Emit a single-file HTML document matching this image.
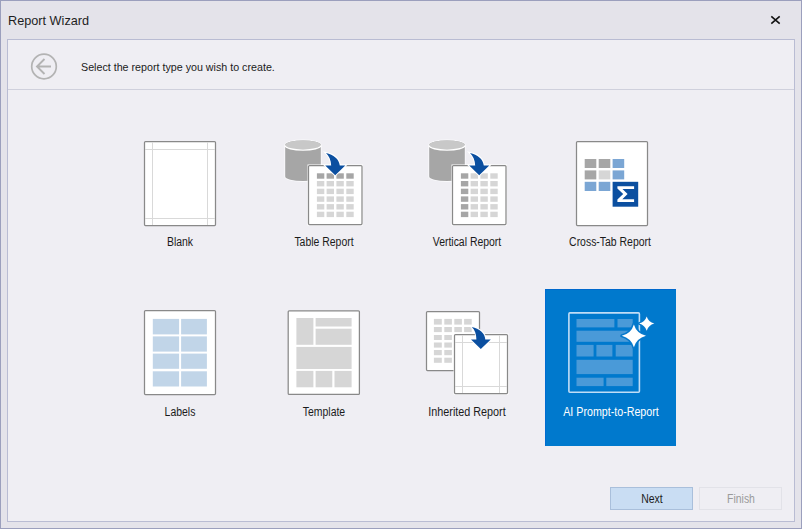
<!DOCTYPE html>
<html><head><meta charset="utf-8">
<style>
html,body{margin:0;padding:0;}
body{width:802px;height:529px;position:relative;overflow:hidden;background:#e4e3ea;font-family:"Liberation Sans",sans-serif;}
.frame{position:absolute;left:0;top:0;width:800px;height:527px;border:1px solid #9b9fbd;}
.panel{position:absolute;left:7px;top:39px;width:786px;height:481px;border:1px solid #b9bcd3;background:#efeef3;}
.t{position:absolute;white-space:nowrap;line-height:12px;}
.title{left:8px;top:14px;font-size:13.5px;color:#1e1e1e;line-height:14px;transform:scaleX(0.94);transform-origin:0 0;}
.hdr{left:81px;top:61px;font-size:11.5px;color:#1b1b1b;transform:scaleX(0.93);transform-origin:0 0;}
.lbl{font-size:12px;color:#1b1b1b;transform:translateX(-50%) scaleX(0.87);transform-origin:50% 0;}
.c{position:absolute;white-space:nowrap;font-size:12px;line-height:12px;color:#1b1b1b;}
svg{position:absolute;left:0;top:0;}
.btn{position:absolute;box-sizing:border-box;}
</style></head>
<body>
<div class="frame"></div>
<div class="t title">Report Wizard</div>
<div class="panel"></div>
<div class="btn" style="left:545px;top:289px;width:131px;height:157px;background:#0079cd;border-top:1px solid #0068cc;border-left:1px solid #006cd0;"></div>
<div class="btn" style="left:610px;top:487px;width:83px;height:23px;background:#c9ddf3;border:1px solid #a9bfdb;"></div>
<div class="btn" style="left:699px;top:487px;width:83px;height:23px;border:1px solid #e2e2e8;"></div>

<svg width="802" height="529" viewBox="0 0 802 529">
  <!-- close X -->
  <path d="M771.3 16.3 L779.7 23.7 M779.7 16.3 L771.3 23.7" stroke="#111" stroke-width="1.55" fill="none"/>
  <!-- header separator -->
  <rect x="8" y="89" width="786" height="1" fill="#cfd0dc"/>
  <!-- back circle -->
  <circle cx="44" cy="66.5" r="12.3" stroke="#b3b3b3" stroke-width="1.7" fill="none"/>
  <path d="M37 66.5 H51 M44.5 59 L37 66.5 L44.5 74" stroke="#b3b3b3" stroke-width="1.9" fill="none"/>

  <!-- Blank -->
  <rect x="144.5" y="141.5" width="71" height="84" fill="#fff" stroke="#898989" stroke-width="1.25" rx="1"/>
  <path d="M152.5 142 V225 M207.5 142 V225 M145 149.5 H215 M145 218.5 H215" stroke="#d9d9d9" stroke-width="1"/>

  <!-- Table report -->
  <g id="tbl">
    <path d="M285.2 145 A17.8 4.6 0 0 1 320.8 145 V176.5 A17.8 4.6 0 0 1 285.2 176.5 Z" fill="#a6a6a6" stroke="#fafafc" stroke-width="1.6" paint-order="stroke"/>
    <ellipse cx="303" cy="145" rx="17.8" ry="4.6" fill="#c8c8c8"/>
    <path d="M285.2 145.5 A17.8 4.6 0 0 0 320.8 145.5" stroke="#fff" stroke-width="1.3" fill="none"/>
    <rect x="307.5" y="164.5" width="55.5" height="61" fill="#fff"/>
    <rect x="308.5" y="165.5" width="53.5" height="59" fill="#fff" stroke="#898989" stroke-width="1.25" rx="1"/>
  </g>
  <g fill="#a6a6a6">
    <rect x="316.9" y="173.3" width="7.4" height="5.4"/><rect x="326.6" y="173.3" width="7.4" height="5.4"/><rect x="336.4" y="173.3" width="7.4" height="5.4"/><rect x="346.3" y="173.3" width="7.4" height="5.4"/>
  </g>
  <g fill="#d6d6d6">
    <rect x="316.9" y="181" width="7.4" height="5.4"/><rect x="326.6" y="181" width="7.4" height="5.4"/><rect x="336.4" y="181" width="7.4" height="5.4"/><rect x="346.3" y="181" width="7.4" height="5.4"/>
    <rect x="316.9" y="188.7" width="7.4" height="5.4"/><rect x="326.6" y="188.7" width="7.4" height="5.4"/><rect x="336.4" y="188.7" width="7.4" height="5.4"/><rect x="346.3" y="188.7" width="7.4" height="5.4"/>
    <rect x="316.9" y="196.4" width="7.4" height="5.4"/><rect x="326.6" y="196.4" width="7.4" height="5.4"/><rect x="336.4" y="196.4" width="7.4" height="5.4"/><rect x="346.3" y="196.4" width="7.4" height="5.4"/>
    <rect x="316.9" y="204.1" width="7.4" height="5.4"/><rect x="326.6" y="204.1" width="7.4" height="5.4"/><rect x="336.4" y="204.1" width="7.4" height="5.4"/><rect x="346.3" y="204.1" width="7.4" height="5.4"/>
    <rect x="316.9" y="211.7" width="7.4" height="5.4"/><rect x="326.6" y="211.7" width="7.4" height="5.4"/><rect x="336.4" y="211.7" width="7.4" height="5.4"/><rect x="346.3" y="211.7" width="7.4" height="5.4"/>
  </g>
  <path id="arr" d="M326 153 C333.5 154.5 339 159 339.8 165.5 L345.3 165.5 L335.2 175.2 L325.2 165.5 L331.2 165.5 C331 160 329 156 326 153 Z" fill="#0b4fa0" stroke="#fff" stroke-width="2" paint-order="stroke"/>

  <!-- Vertical report -->
  <use href="#tbl" x="144" y="0"/>
  <g fill="#a6a6a6">
    <rect x="460.9" y="173.3" width="7.4" height="5.4"/><rect x="460.9" y="181" width="7.4" height="5.4"/><rect x="460.9" y="188.7" width="7.4" height="5.4"/><rect x="460.9" y="196.4" width="7.4" height="5.4"/><rect x="460.9" y="204.1" width="7.4" height="5.4"/><rect x="460.9" y="211.7" width="7.4" height="5.4"/>
  </g>
  <g fill="#d6d6d6">
    <rect x="470.6" y="173.3" width="7.4" height="5.4"/><rect x="480.4" y="173.3" width="7.4" height="5.4"/><rect x="490.3" y="173.3" width="7.4" height="5.4"/>
    <rect x="470.6" y="181" width="7.4" height="5.4"/><rect x="480.4" y="181" width="7.4" height="5.4"/><rect x="490.3" y="181" width="7.4" height="5.4"/>
    <rect x="470.6" y="188.7" width="7.4" height="5.4"/><rect x="480.4" y="188.7" width="7.4" height="5.4"/><rect x="490.3" y="188.7" width="7.4" height="5.4"/>
    <rect x="470.6" y="196.4" width="7.4" height="5.4"/><rect x="480.4" y="196.4" width="7.4" height="5.4"/><rect x="490.3" y="196.4" width="7.4" height="5.4"/>
    <rect x="470.6" y="204.1" width="7.4" height="5.4"/><rect x="480.4" y="204.1" width="7.4" height="5.4"/><rect x="490.3" y="204.1" width="7.4" height="5.4"/>
    <rect x="470.6" y="211.7" width="7.4" height="5.4"/><rect x="480.4" y="211.7" width="7.4" height="5.4"/><rect x="490.3" y="211.7" width="7.4" height="5.4"/>
  </g>
  <use href="#arr" x="144" y="0"/>

  <!-- Cross-tab -->
  <rect x="576.5" y="141.5" width="71" height="84" fill="#fff" stroke="#898989" stroke-width="1.25" rx="1"/>
  <rect x="584.7" y="159" width="11.6" height="9" fill="#a6a6a6"/>
  <rect x="598.7" y="159" width="11.6" height="9" fill="#a6a6a6"/>
  <rect x="612.6" y="159" width="11.6" height="9" fill="#7ba6d4"/>
  <rect x="584.7" y="170.4" width="11.6" height="9" fill="#a6a6a6"/>
  <rect x="598.7" y="170.4" width="11.6" height="9" fill="#d6d6d6"/>
  <rect x="612.6" y="170.4" width="11.6" height="9" fill="#7ba6d4"/>
  <rect x="584.7" y="181.8" width="11.6" height="9.2" fill="#7ba6d4"/>
  <rect x="598.7" y="181.8" width="11.6" height="9.2" fill="#7ba6d4"/>
  <rect x="612.6" y="181.8" width="25.6" height="24.9" fill="#0b4fa0"/>
  <path d="M617.4 186.2 H634.1 V189 H622.5 L627.6 194.1 L622.3 199.3 H634.1 V202 H617.4 V199.6 L623.2 194.1 L617.4 188.6 Z" fill="#fff"/>

  <!-- Labels -->
  <rect x="144.5" y="310.5" width="71" height="84" fill="#fff" stroke="#898989" stroke-width="1.25" rx="1"/>
  <g fill="#c1d5e8">
    <rect x="152.8" y="318.9" width="26.3" height="15.5"/><rect x="181.1" y="318.9" width="25.8" height="15.5"/>
    <rect x="152.8" y="336.4" width="26.3" height="15.2"/><rect x="181.1" y="336.4" width="25.8" height="15.2"/>
    <rect x="152.8" y="353.6" width="26.3" height="15.2"/><rect x="181.1" y="353.6" width="25.8" height="15.2"/>
    <rect x="152.8" y="371.3" width="26.3" height="15.2"/><rect x="181.1" y="371.3" width="25.8" height="15.2"/>
  </g>

  <!-- Template -->
  <rect x="288.2" y="310.8" width="71.2" height="83.6" fill="#fff" stroke="#898989" stroke-width="1.25" rx="1"/>
  <g fill="#d6d6d6">
    <rect x="296.4" y="318" width="17" height="26.8"/>
    <rect x="315.6" y="318" width="36" height="8.5"/>
    <rect x="315.6" y="328.7" width="36" height="16.1"/>
    <rect x="296.4" y="346.9" width="55.2" height="22.1"/>
    <rect x="296.4" y="370.9" width="17" height="16.4"/>
    <rect x="315.6" y="370.9" width="16.7" height="16.4"/>
    <rect x="334.5" y="370.9" width="17.1" height="16.4"/>
  </g>

  <!-- Inherited -->
  <rect x="426.5" y="311.5" width="53" height="59" fill="#fff" stroke="#898989" stroke-width="1.25" rx="1"/>
  <g fill="#d6d6d6">
    <rect x="433.9" y="318.9" width="7.9" height="5.7"/><rect x="444.3" y="318.9" width="7.6" height="5.7"/><rect x="454.3" y="318.9" width="7.6" height="5.7"/><rect x="464.1" y="318.9" width="7.6" height="5.7"/>
    <rect x="433.9" y="327" width="7.9" height="5.1"/><rect x="444.3" y="327" width="7.6" height="5.1"/><rect x="454.3" y="327" width="7.6" height="5.1"/><rect x="464.1" y="327" width="7.6" height="5.1"/>
    <rect x="433.9" y="335" width="7.9" height="5"/><rect x="444.3" y="335" width="7.6" height="5"/>
    <rect x="433.9" y="342.5" width="7.9" height="5.1"/><rect x="444.3" y="342.5" width="7.6" height="5.1"/>
    <rect x="433.9" y="350" width="7.9" height="5.2"/><rect x="444.3" y="350" width="7.6" height="5.2"/>
    <rect x="433.9" y="357.7" width="7.9" height="5.1"/><rect x="444.3" y="357.7" width="7.6" height="5.1"/>
  </g>
  <rect x="453.5" y="333.5" width="55" height="61" fill="#fff"/>
  <rect x="454.5" y="334.5" width="53" height="59" fill="#fff" stroke="#898989" stroke-width="1.25" rx="1"/>
  <path d="M462.5 335 V393 M499.5 335 V393 M455 342.5 H507 M455 386.5 H507" stroke="#d9d9d9" stroke-width="1"/>
  <path d="M471.7 326.9 C479.5 328.3 485 333 485.3 339.5 L490.8 339.5 L480.8 348.9 L471 339.5 L476.4 339.5 C476.4 334 474.8 329.5 471.7 326.9 Z" fill="#0b4fa0" stroke="#fff" stroke-width="2" paint-order="stroke"/>

  <!-- AI -->
  <rect x="568.9" y="312.9" width="70.5" height="79.3" rx="1" fill="none" stroke="#c0ddf6" stroke-width="1.6"/>
  <g fill="#4a9ad8">
    <rect x="576.5" y="319" width="37.9" height="8.4"/><rect x="617.5" y="319" width="15.2" height="8.4"/>
    <rect x="576.5" y="330.7" width="56.2" height="11.1"/>
    <rect x="576.5" y="344.9" width="17.1" height="11.6"/><rect x="596.4" y="344.9" width="16" height="11.6"/><rect x="615.7" y="344.9" width="17" height="11.6"/>
    <rect x="576.5" y="359.8" width="56.2" height="14.3"/>
    <rect x="576.5" y="377.7" width="27.1" height="8.4"/><rect x="606.3" y="377.7" width="26.4" height="8.4"/>
  </g>
  <path d="M633.9 324.40000000000003 Q636.5 333.2 646.0 335.8 Q636.5 338.40000000000003 633.9 347.2 Q631.3 338.40000000000003 621.8 335.8 Q631.3 333.2 633.9 324.40000000000003 Z" fill="#fff" stroke="#0779cc" stroke-width="3.2" stroke-linejoin="round" paint-order="stroke"/>
  <path d="M646.7 316.40000000000003 Q648.4000000000001 321.90000000000003 654.3000000000001 323.6 Q648.4000000000001 325.3 646.7 330.8 Q645.0 325.3 639.1 323.6 Q645.0 321.90000000000003 646.7 316.40000000000003 Z" fill="#fff" stroke="#0779cc" stroke-width="2.6" stroke-linejoin="round" paint-order="stroke"/>
</svg>

<div class="t hdr">Select the report type you wish to create.</div>
<div class="c lbl" style="left:179.8px;top:236px;">Blank</div>
<div class="c lbl" style="left:323.5px;top:236px;">Table Report</div>
<div class="c lbl" style="left:466.7px;top:236px;">Vertical Report</div>
<div class="c lbl" style="left:610.4px;top:236px;">Cross-Tab Report</div>
<div class="c lbl" style="left:180.3px;top:406px;">Labels</div>
<div class="c lbl" style="left:323.5px;top:406px;">Template</div>
<div class="c lbl" style="left:466.7px;top:406px;transform:translateX(-50%) scaleX(0.9);">Inherited Report</div>
<div class="c lbl" style="left:610.5px;top:406px;color:#fff;transform:translateX(-50%) scaleX(0.89);">AI Prompt-to-Report</div>
<div class="c lbl" style="left:651.5px;top:493px;">Next</div>
<div class="c lbl" style="left:740.5px;top:493px;color:#9a9a9a;">Finish</div>
</body></html>
